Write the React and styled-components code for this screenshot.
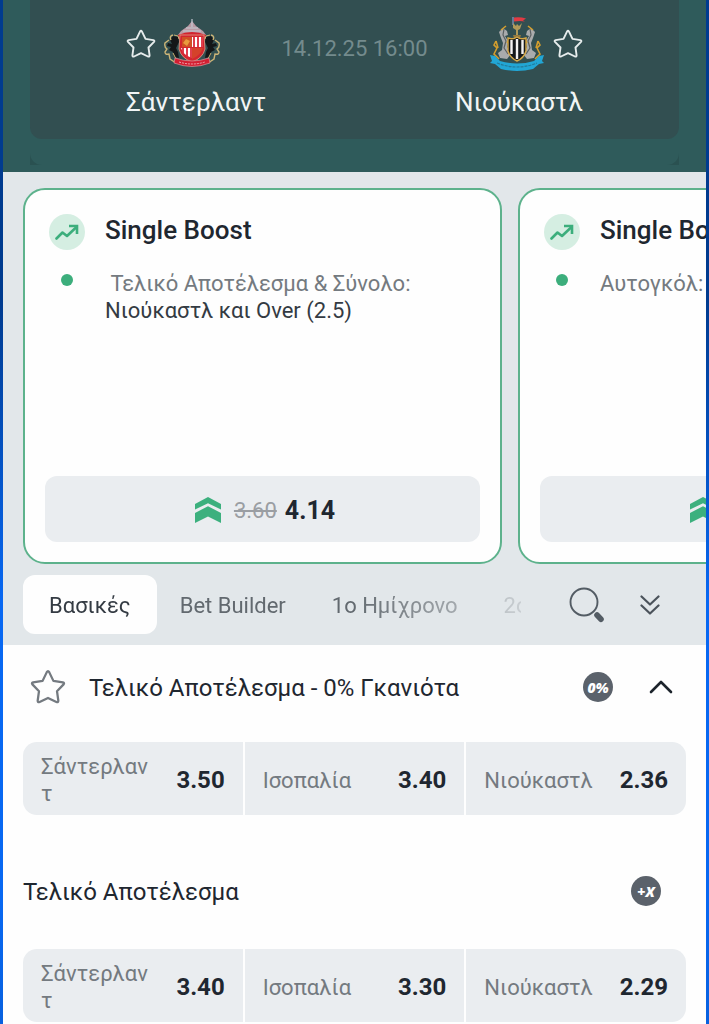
import React from 'react'
import styled, { createGlobalStyle } from 'styled-components'

const markets = [
  {
    id: 1,
    title: 'Τελικό Αποτέλεσμα - 0% Γκανιότα',
    badge: '0%',
    full: true,
    odds: [
      { name: 'Σάντερλαντ', price: '3.50' },
      { name: 'Ισοπαλία', price: '3.40' },
      { name: 'Νιούκαστλ', price: '2.36' }
    ]
  },
  {
    id: 2,
    title: 'Τελικό Αποτέλεσμα',
    badge: '+X',
    full: false,
    odds: [
      { name: 'Σάντερλαντ', price: '3.40' },
      { name: 'Ισοπαλία', price: '3.30' },
      { name: 'Νιούκαστλ', price: '2.29' }
    ]
  }
]

const tabs = ['Βασικές', 'Bet Builder', '1ο Ημίχρονο', '2ο Ημίχρονο']

export default function App () {
  const [tab, setTab] = React.useState(tabs[0])

  return (
    <Page>
      <GlobalStyle />
      <Content>
        <Header>
          <HeaderBack>
            <HeaderFront>
              <Match>
                <Team $align='start'>
                  <TeamIcons>
                    <IconButton aria-label='Σάντερλαντ'>
                      <Star size={30} />
                    </IconButton>
                    <SunderlandCrest />
                  </TeamIcons>
                  <TeamName>Σάντερλαντ</TeamName>
                </Team>
                <Kickoff>14.12.25 16:00</Kickoff>
                <Team $align='end'>
                  <TeamIcons>
                    <NewcastleCrest />
                    <IconButton aria-label='Νιούκαστλ'>
                      <Star size={30} />
                    </IconButton>
                  </TeamIcons>
                  <TeamName>Νιούκαστλ</TeamName>
                </Team>
              </Match>
            </HeaderFront>
          </HeaderBack>
        </Header>

        <Boosts>
          <BoostCard market={<>&nbsp;Τελικό Αποτέλεσμα &amp; Σύνολο:</>} pick='Νιούκαστλ και Over (2.5)' was='3.60' now='4.14' />
          <BoostCard market='Αυτογκόλ:' pick='' was='8.00' now='9.20' />
        </Boosts>

        <TabBar>
          <TabList role='tablist'>
            {tabs.map(t => (
              <Tab key={t} role='tab' aria-selected={t === tab} $active={t === tab} onClick={() => setTab(t)}>
                {t}
              </Tab>
            ))}
          </TabList>
          <TabActions>
            <IconButton aria-label='Search'>
              <SearchIcon />
            </IconButton>
            <IconButton aria-label='Expand all'>
              <DoubleChevron />
            </IconButton>
          </TabActions>
        </TabBar>

        <main>
          {markets.map(m => <Market key={m.id} {...m} />)}
        </main>
      </Content>
    </Page>
  )
}

function BoostCard ({ market, pick, was, now }) {
  return (
    <Card>
      <CardBody>
        <BoostBadge>
          <TrendIcon />
        </BoostBadge>
        <CardTitle>Single Boost</CardTitle>
        <Dot />
        <Selection>
          {market}
          <Pick>{pick}</Pick>
        </Selection>
      </CardBody>
      <BoostButton>
        <BoostArrows />
        <OldPrice>{was}</OldPrice>
        <NewPrice>{now}</NewPrice>
      </BoostButton>
    </Card>
  )
}

function Market ({ title, badge, full, odds }) {
  return (
    <MarketSection>
      <MarketHead $full={full}>
        {full && (
          <StarButton aria-label='Favourite'>
            <Star size={36} />
          </StarButton>
        )}
        <MarketTitle>{title}</MarketTitle>
        <Badge>{badge}</Badge>
        {full && (
          <IconButton aria-label='Collapse'>
            <ChevronUp />
          </IconButton>
        )}
      </MarketHead>
      <OddsRow>
        {odds.map(o => (
          <Odd key={o.name}>
            <OddName>{o.name}</OddName>
            <OddPrice>{o.price}</OddPrice>
          </Odd>
        ))}
      </OddsRow>
    </MarketSection>
  )
}

function Star ({ size }) {
  return (
    <svg width={size} height={size} viewBox='0 0 30 30' fill='none' stroke='currentColor' strokeWidth='1.9' strokeLinejoin='round'>
      <path d='M14 2.600q1-1.800 2 0l3.500 7.300 7.900 1.200q1.600.4.6 1.700l-5.500 5.700 1.100 7.800q0 1.800-1.600 1.200L15 24.100l-7 3.400q-1.600.6-1.600-1.200l1.100-7.800L2 12.800q-1-1.300.6-1.700l7.900-1.200z' />
    </svg>
  )
}

function TrendIcon () {
  return (
    <svg width='24' height='18' viewBox='0 0 24 18' fill='none' stroke='#3cae7c' strokeWidth='2.600'>
      <path d='M1.500 15.500l6-6 4.500 3.500 9-8.500' strokeLinecap='round' strokeLinejoin='round' />
      <path d='M14 3h8v8' />
    </svg>
  )
}

function BoostArrows () {
  return (
    <svg width='28' height='28' viewBox='0 0 28 28' fill='#3cb07e'>
      <path d='M1 8L14 1l13 7v5.500L14 7.200 1 13.500z' />
      <path d='M1 17l13-6.800L27 17v10L14 20.500 1 27z' />
    </svg>
  )
}

function SearchIcon () {
  return (
    <svg width='36' height='36' viewBox='0 0 36 36' fill='none' stroke='#535c64' strokeLinecap='round'>
      <circle cx='15' cy='15' r='13.500' strokeWidth='1.900' />
      <path d='M28 28l4 4.200' strokeWidth='5.600' />
    </svg>
  )
}

function DoubleChevron () {
  return (
    <svg width='20' height='22' viewBox='0 0 20 22' fill='none' stroke='#4b535b' strokeWidth='2.200' strokeLinecap='round' strokeLinejoin='round'>
      <path d='M1.500 2.500L10 10.500l8.500-8M1.500 11.500L10 19.500l8.500-8' />
    </svg>
  )
}

function ChevronUp () {
  return (
    <svg width='24' height='14' viewBox='0 0 24 14' fill='none' stroke='#1d242c' strokeWidth='2.600' strokeLinecap='round' strokeLinejoin='round'>
      <path d='M2 12L12 2l10 10' />
    </svg>
  )
}

function Lion () {
  return (
    <>
      <path d='M9 17l5 1 1 5-3 6 2 4 1 6-5-1-1-5-4-2 2-3-4-1 1-3 4 1-2-4z' fill='#141718' />
      <path d='M9 16q-4 1-2 5M5 21l-4 3q-1 4 2 6l-2 3q0 3 4 2l1 5 6 4' stroke='#cbb477' strokeWidth='1.400' fill='none' />
      <path d='M10 16l4 1 1 3M9 34l3 6' stroke='#cbb477' strokeWidth='1' fill='none' />
    </>
  )
}

function SunderlandCrest () {
  return (
    <svg width='56' height='50' viewBox='0 0 56 50'>
      <path d='M14 16L17 12l7-5 4-5 4 5 7 5 3 4z' fill='#b99aa4' />
      <path d='M28 0v8M22 9h12M19 12h18' stroke='#c3c9d2' strokeWidth='1.200' />
      <path d='M14 16q14-6 28 0l-1 5H15z' fill='#d2232e' />
      <Lion />
      <g transform='matrix(-1 0 0 1 56 0)'>
        <Lion />
      </g>
      <path d='M16 16h24l1 14q-2 9-13 13-11-4-13-13z' fill='#d3262f' stroke='#e0a088' strokeWidth='.8' />
      <path d='M18 18h10v10H18z' fill='#cf4f24' />
      <path d='M19 24l3-4 4 2-3 5z' fill='#e99a3e' />
      <path d='M28 18h11v10H28zM17 29h11v10q-9-3-11-10z' fill='#fff' />
      <path d='M30 18v10M34 18v10M38 18v10M19 29v6M23 29v9M27 29v10' stroke='#dc2a3a' strokeWidth='1.800' />
      <path d='M28 29h11q-2 7-11 11z' fill='#d4422a' />
      <path d='M11 39q17 6 34 0l1 5q-18 7-36 0z' fill='#d31f32' stroke='#d8979c' strokeWidth='.7' />
      <path d='M15 43q13 4 26 0' stroke='#eea5ad' strokeWidth='1' strokeDasharray='2 1' fill='none' />
    </svg>
  )
}

function Seahorse () {
  return (
    <>
      <path d='M10 16l4-4 4 3 1 4-3 1 3 5-1 6 4 7-4 5-7-1-2-5 4-3 1-7-2-5z' fill='#a9abac' />
      <path d='M15 13l-1 6 3 6-2 7 4 6' stroke='#5b6062' strokeWidth='1.200' fill='none' />
      <path d='M12 14l5-4M7 25l-2 4 3 3-3 6 5 5M7 25l2 7M18 27l2-4' stroke='#d39e2e' strokeWidth='1.600' fill='none' />
    </>
  )
}

function NewcastleCrest () {
  return (
    <svg width='56' height='56' viewBox='0 0 56 56'>
      <path d='M24 1v8' stroke='#7c8fb5' strokeWidth='1.400' />
      <path d='M25 1.500q6-1 12 1l-3 2 2 1q-5-1-11 0z' fill='#e23a43' />
      <path d='M24 7l3 3 1-2 2 2 3-3-2 6-2 1v5h-2v-5l-3-2z' fill='#b19a59' />
      <path d='M24 19h8l-1 3h-6z' fill='#927940' />
      <Seahorse />
      <g transform='matrix(-1 0 0 1 56 0)'>
        <Seahorse />
      </g>
      <path d='M1 39l5 1 5 5q17 5 34 0l5-5 5-1-2 6 2 2-5 1-6 5q-16 4-32 0l-6-5-5-1 2-2z' fill='#22a6d5' />
      <path d='M8 47q20 8 40 0' stroke='#237a9a' strokeWidth='1.200' strokeDasharray='3 1' fill='none' />
      <path d='M19 22q5 2 9-1 4 3 9 1v13q-2 7-9 10-7-3-9-10z' fill='#16191b' stroke='#d4a746' strokeWidth='1.400' />
      <path d='M22.500 24v14M28 23v20M33.500 24v14' stroke='#f5f3f1' strokeWidth='2.400' />
    </svg>
  )
}

const GlobalStyle = createGlobalStyle`
  * {
    box-sizing: border-box;
  }
  body {
    margin: 0;
    font-family: Roboto, 'Noto Sans', sans-serif;
    color: #1f2730;
  }
  button {
    font-family: inherit;
    color: inherit;
    border: none;
    background: none;
    padding: 0;
    margin: 0;
    cursor: pointer;
  }
  svg {
    display: block;
    flex: none;
  }
`

const Page = styled.div`
  display: flex;
  min-height: 100vh;
  padding: 0 3px;
  background: linear-gradient(#003b8f 0, #003b8f 300px, #0868f2 600px, #0868f2 900px, #085fda 100%);
`

const Content = styled.div`
  flex: 1;
  min-width: 0;
  background: #fefefe;
`

const Header = styled.header`
  background: #2f5b5b;
  padding: 0 27px 7px;
`

const HeaderBack = styled.div`
  background: #2a5151;
`

const HeaderFront = styled.div`
  background: #2f5b5b;
  border-radius: 0 0 12px 12px;
  padding-bottom: 26px;
`

const Match = styled.div`
  display: grid;
  grid-template-columns: 1fr auto 1fr;
  background: #324f51;
  border-radius: 0 0 12px 12px;
  padding: 16px 96px 21px;
`

const Team = styled.div`
  display: flex;
  flex-direction: column;
  align-items: ${p => p.$align};
`

const TeamIcons = styled.div`
  display: flex;
  align-items: center;
  gap: 8px;
  height: 56px;
  color: #e6ecec;
`

const TeamName = styled.span`
  margin-top: 14px;
  font-size: 26px;
  line-height: 32px;
  color: #f1f5f5;
`

const Kickoff = styled.time`
  padding-top: 19px;
  font-size: 22px;
  line-height: 28px;
  color: #748b8d;
`

const IconButton = styled.button`
  display: flex;
  align-items: center;
  justify-content: center;
`

const Boosts = styled.section`
  display: flex;
  gap: 16px;
  padding: 16px 0 0 20px;
  overflow: hidden;
  background: #e2e7ea;
`

const Card = styled.article`
  display: flex;
  flex: none;
  flex-direction: column;
  justify-content: space-between;
  width: 479px;
  min-height: 376px;
  padding: 20px;
  border: 2px solid #5db28c;
  border-radius: 22px;
  background: #fefefe;
`

const CardBody = styled.div`
  display: grid;
  grid-template-columns: 44px 1fr;
  column-gap: 16px;
  row-gap: 20px;
  justify-items: center;
`

const BoostBadge = styled.span`
  display: flex;
  align-items: center;
  justify-content: center;
  width: 36px;
  height: 36px;
  margin-top: 4px;
  border-radius: 50%;
  background: #d5eee2;
`

const CardTitle = styled.h2`
  justify-self: start;
  margin: 4px 0 0;
  font-size: 26px;
  line-height: 32px;
  font-weight: 500;
`

const Dot = styled.span`
  width: 12px;
  height: 12px;
  margin-top: 4px;
  border-radius: 50%;
  background: #3cae7c;
`

const Selection = styled.p`
  justify-self: start;
  margin: 0;
  font-size: 22px;
  line-height: 27px;
  color: #747a80;
`

const Pick = styled.span`
  display: block;
  color: #343b43;
`

const BoostButton = styled.button`
  display: flex;
  align-items: center;
  justify-content: center;
  gap: 8px;
  height: 66px;
  padding: 2px 0 0 4px;
  border-radius: 12px;
  background: #eaedf0;
`

const OldPrice = styled.s`
  margin-left: 4px;
  font-size: 22px;
  color: #9a9ea3;
`

const NewPrice = styled.strong`
  font-size: 25px;
  font-weight: 700;
`

const TabBar = styled.nav`
  display: flex;
  align-items: center;
  justify-content: space-between;
  gap: 48px;
  padding: 11px 46px 11px 20px;
  background: #e2e7ea;
`

const TabList = styled.div`
  display: flex;
  flex: 1;
  min-width: 0;
  overflow: hidden;
  mask-image: linear-gradient(90deg, #000 66%, transparent 108%);
`

const Tab = styled.button`
  flex: none;
  height: 59px;
  padding: 2px ${p => (p.$active ? 26 : 23)}px 0;
  border-radius: 12px;
  background: ${p => (p.$active ? '#fefefe' : 'none')};
  color: ${p => (p.$active ? '#343b43' : '#62696f')};
  font-size: 22px;
  white-space: nowrap;
`

const TabActions = styled.div`
  display: flex;
  align-items: center;
  gap: 35px;
`

const MarketSection = styled.section`
  padding: 0 20px;
`

const MarketHead = styled.div`
  display: flex;
  align-items: center;
  height: 84px;
  margin-bottom: ${p => (p.$full ? 13 : 16)}px;
  padding-right: ${p => (p.$full ? 13 : 25)}px;
`

const StarButton = styled(IconButton)`
  margin: 0 23px 0 7px;
  color: #747a80;
`

const MarketTitle = styled.h3`
  flex: 1;
  margin: 0;
  padding-top: 2px;
  font-size: 24px;
  line-height: 32px;
  font-weight: 400;
`

const Badge = styled.span`
  display: flex;
  align-items: center;
  justify-content: center;
  width: 30px;
  height: 30px;
  border-radius: 50%;
  background: #5b626b;
  color: #fff;
  font-family: 'Open Sans', sans-serif;
  font-size: 14px;
  font-weight: 800;
  font-style: italic;

  & + button {
    margin-left: 36px;
  }
`

const OddsRow = styled.div`
  display: grid;
  grid-template-columns: repeat(3, 1fr);
  gap: 2px;
  margin-bottom: 34px;
  border-radius: 14px;
  overflow: hidden;
`

const Odd = styled.button`
  display: flex;
  align-items: center;
  justify-content: space-between;
  gap: 22px;
  height: 73px;
  padding: 3px 18px 0;
  background: #eaedf0;
  text-align: left;
`

const OddName = styled.span`
  font-size: 22px;
  line-height: 27px;
  color: #747a80;
  word-break: break-all;
`

const OddPrice = styled.strong`
  font-size: 24px;
  font-weight: 700;
`
